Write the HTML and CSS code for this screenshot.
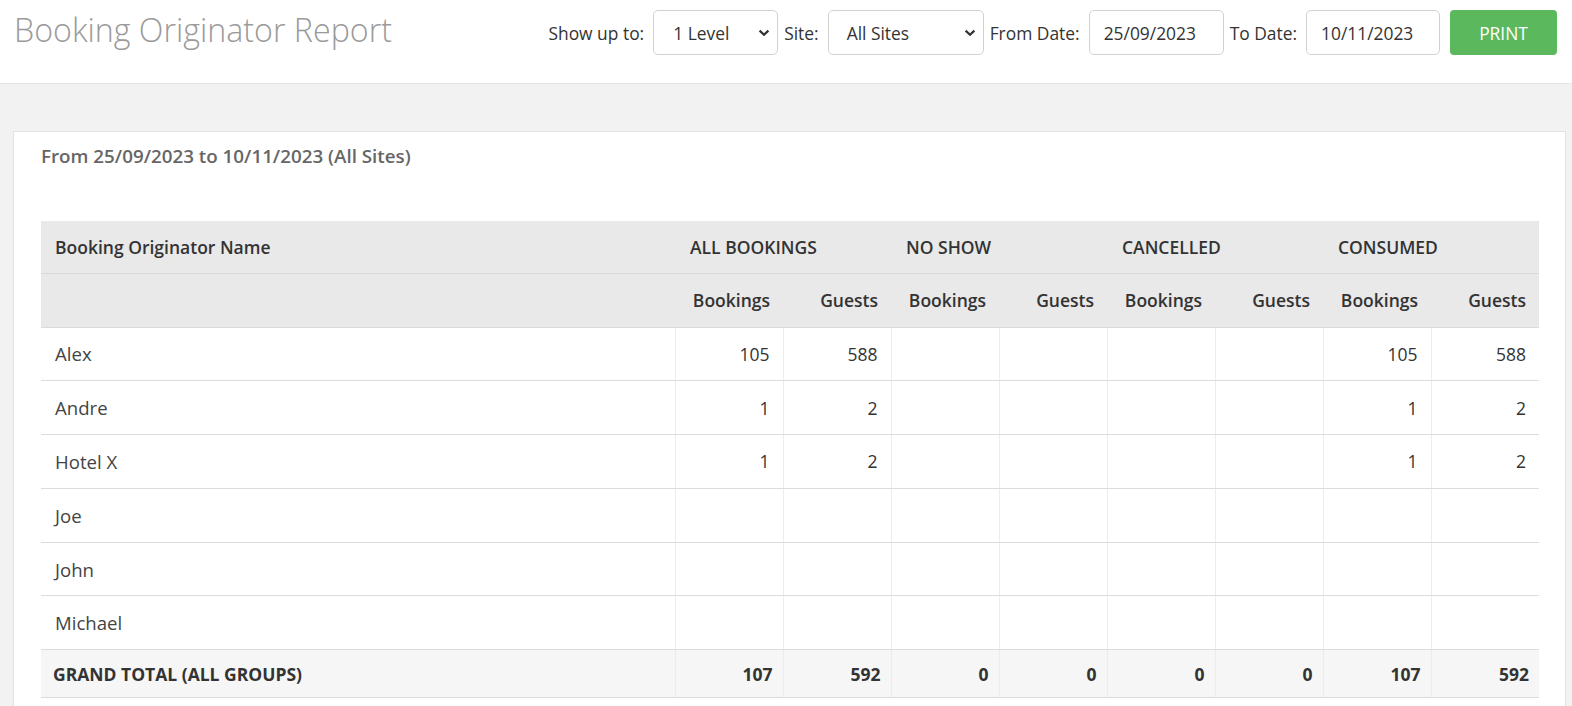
FILE: index.html
```html
<!DOCTYPE html>
<html lang="en">
<head>
<meta charset="utf-8">
<title>Booking Originator Report</title>
<link rel="stylesheet" href="styles.css">
</head>
<body>
<header class="topbar">
  <h1 class="title">Booking Originator Report</h1>
  <div class="controls">
    <label class="ctl-label">Show up to:</label>
    <div class="select select-level"><span>1 Level</span>
      <svg class="chev" width="12" height="8" viewBox="0 0 12 8"><path d="M1.6 1.6 L6 5.8 L10.4 1.6" fill="none" stroke="#333" stroke-width="2.2"/></svg>
    </div>
    <label class="ctl-label">Site:</label>
    <div class="select select-site"><span>All Sites</span>
      <svg class="chev" width="12" height="8" viewBox="0 0 12 8"><path d="M1.6 1.6 L6 5.8 L10.4 1.6" fill="none" stroke="#333" stroke-width="2.2"/></svg>
    </div>
    <label class="ctl-label">From Date:</label>
    <div class="input input-from">25/09/2023</div>
    <label class="ctl-label">To Date:</label>
    <div class="input input-to">10/11/2023</div>
    <button class="btn-print">PRINT</button>
  </div>
</header>
<main class="page">
  <section class="card">
    <div class="subtitle">From 25/09/2023 to 10/11/2023 (All Sites)</div>
    <table class="report">
      <colgroup>
        <col class="c-name">
        <col class="c-num"><col class="c-num"><col class="c-num"><col class="c-num">
        <col class="c-num"><col class="c-num"><col class="c-num"><col class="c-num">
      </colgroup>
      <thead>
        <tr class="h1">
          <th class="th-name">Booking Originator Name</th>
          <th colspan="2" class="th-group">ALL BOOKINGS</th>
          <th colspan="2" class="th-group">NO SHOW</th>
          <th colspan="2" class="th-group">CANCELLED</th>
          <th colspan="2" class="th-group">CONSUMED</th>
        </tr>
        <tr class="h2">
          <th></th>
          <th class="th-sub">Bookings</th><th class="th-sub">Guests</th>
          <th class="th-sub">Bookings</th><th class="th-sub">Guests</th>
          <th class="th-sub">Bookings</th><th class="th-sub">Guests</th>
          <th class="th-sub">Bookings</th><th class="th-sub">Guests</th>
        </tr>
      </thead>
      <tbody>
        <tr><td class="name">Alex</td><td>105</td><td>588</td><td></td><td></td><td></td><td></td><td>105</td><td>588</td></tr>
        <tr><td class="name">Andre</td><td>1</td><td>2</td><td></td><td></td><td></td><td></td><td>1</td><td>2</td></tr>
        <tr><td class="name">Hotel X</td><td>1</td><td>2</td><td></td><td></td><td></td><td></td><td>1</td><td>2</td></tr>
        <tr><td class="name">Joe</td><td></td><td></td><td></td><td></td><td></td><td></td><td></td><td></td></tr>
        <tr><td class="name">John</td><td></td><td></td><td></td><td></td><td></td><td></td><td></td><td></td></tr>
        <tr><td class="name">Michael</td><td></td><td></td><td></td><td></td><td></td><td></td><td></td><td></td></tr>
        <tr class="total"><td class="name">GRAND TOTAL (ALL GROUPS)</td><td>107</td><td>592</td><td>0</td><td>0</td><td>0</td><td>0</td><td>107</td><td>592</td></tr>
      </tbody>
    </table>
  </section>
</main>
</body>
</html>
```

FILE: styles.css
```css
* { box-sizing: border-box; }
html, body {
  margin: 0;
  padding: 0;
  background: #f2f2f2;
  font-family: "Open Sans", "Liberation Sans", sans-serif;
  color: #333;
  overflow: hidden;
}
.topbar {
  background: #fff;
  height: 84px;
  border-bottom: 1px solid #e6e6e6;
  display: flex;
  justify-content: space-between;
  align-items: flex-start;
  padding: 0 15px 0 14px;
}
.title {
  margin: 8px 0 0 0;
  font-size: 32.2px;
  font-weight: 300;
  color: #9a9a9a;
  line-height: 43px;
}
.controls {
  display: flex;
  align-items: center;
  margin-top: 10px;
  height: 45px;
}
.ctl-label {
  font-size: 17.4px;
  color: #333;
  margin: 0 9px 0 6px;
}
.controls .ctl-label:first-child { margin-left: 0; }
.select, .input {
  height: 45px;
  border: 1px solid #d2d2d2;
  border-radius: 5px;
  background: #fff;
  font-size: 17.4px;
  color: #333;
  display: flex;
  align-items: center;
  justify-content: space-between;
  padding: 0 7px 0 19px;
}
.select-level { width: 125px; }
.select-site { width: 156px; padding-left: 18px; }
.chev { display: block; }
.input { width: 135px; padding-left: 14px; }
.input-to { width: 134px; }
.btn-print {
  height: 45px;
  width: 107px;
  margin-left: 10px;
  background: #5cb85c;
  border: none;
  border-radius: 4px;
  color: #fff;
  font-family: "Open Sans", "Liberation Sans", sans-serif;
  font-size: 17.4px;
  padding: 0;
}
.page {
  padding: 47px 6px 0 13px;
}
.card {
  background: #fff;
  border: 1px solid #e2e2e2;
  border-bottom: none;
  padding: 12px 26px 40px 27px;
}
.subtitle {
  font-size: 18.8px;
  font-weight: 600;
  color: #666;
  line-height: 24px;
  margin-bottom: 53px;
}
.report {
  width: 100%;
  border-collapse: collapse;
  table-layout: fixed;
  font-size: 17.5px;
}
.c-name { width: 634px; }
.report th {
  background: #e9e9e9;
  font-weight: 600;
  color: #333;
  text-align: left;
  padding: 0;
  font-size: 17.5px;
}
.report .h1 th {
  height: 52px;
  border-bottom: 1px solid #dadada;
}
.report .h2 th {
  height: 54px;
  border-bottom: 1px solid #dadada;
}
.th-name { padding-left: 14px !important; }
.th-group { padding-left: 15px !important; }
.report .th-sub {
  text-align: right;
  padding-right: 13px;
}
.report td {
  height: 53.8px;
  border-bottom: 1px solid #dcdcdc;
  border-left: 1px solid #ececec;
  text-align: right;
  padding: 0 13px 0 0;
  color: #333;
  font-size: 17.5px;
}
.report td.name {
  text-align: left;
  padding-left: 14px;
  border-left: none;
  font-size: 18.6px;
  color: #444;
}
.report .total td {
  height: 48px;
  background: #f6f6f6;
  font-weight: 700;
  font-size: 17.5px;
  padding-right: 10px;
}
.report .total td.name {
  font-size: 17.5px;
  padding-left: 12px;
  color: #333;
}
```
